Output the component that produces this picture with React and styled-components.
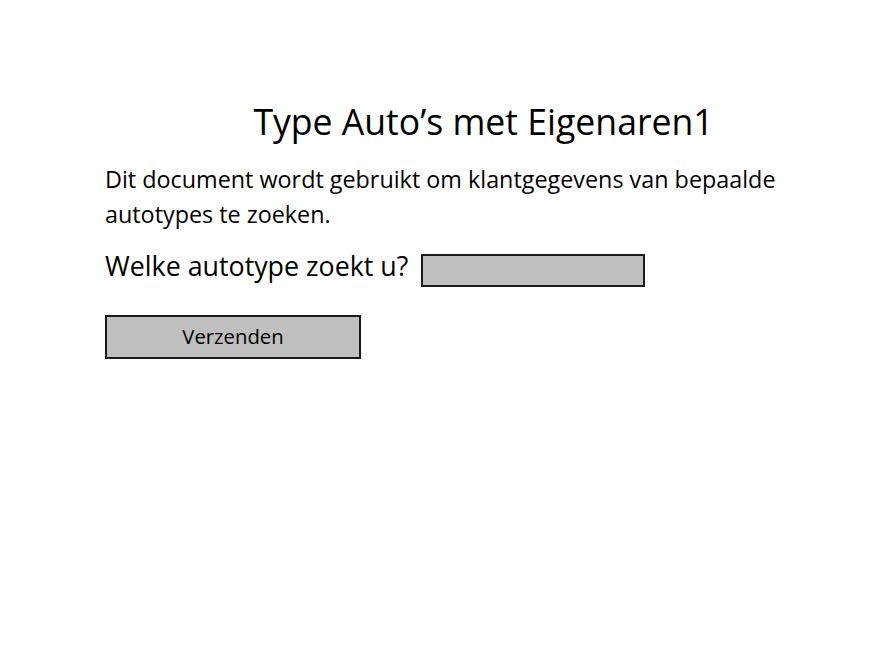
import React from 'react';
import styled, { createGlobalStyle } from 'styled-components';

const GlobalStyle = createGlobalStyle`
  html, body {
    margin: 0;
    padding: 0;
    background: #ffffff;
  }
  body {
    font-family: 'Open Sans', 'Noto Sans', sans-serif;
    color: #000000;
  }
`;

const Page = styled.div`
  width: 888px;
  height: 651px;
  box-sizing: border-box;
  padding: 99px 0 0 105px;
`;

const Title = styled.h1`
  width: 757px;
  margin: 0 0 19px;
  font-size: 35.6px;
  font-weight: 400;
  line-height: 44px;
  text-align: center;
`;

const Intro = styled.p`
  width: 710px;
  margin: 0 0 16px;
  font-size: 23.35px;
  line-height: 35px;
`;

const Row = styled.div`
  display: flex;
  align-items: center;
  gap: 13px;
  margin-bottom: 23px;
`;

const Label = styled.label`
  font-size: 26.8px;
  line-height: 36px;
  padding-bottom: 8px;
`;

const Field = styled.input`
  width: 224px;
  height: 33px;
  box-sizing: border-box;
  border: 2px solid #1a1a1a;
  background: #bfbfbf;
  outline: none;
  padding: 0 6px;
`;

const Button = styled.button`
  width: 256px;
  height: 44px;
  box-sizing: border-box;
  border: 2px solid #1a1a1a;
  background: #bfbfbf;
  font-family: inherit;
  font-size: 20.3px;
  color: #000000;
  padding: 0 0 3px;
  cursor: pointer;
`;

export default function App() {
  return (
    <>
      <GlobalStyle />
      <Page>
        <Title>Type Auto’s met Eigenaren1</Title>
        <Intro>
          Dit document wordt gebruikt om klantgegevens van bepaalde autotypes te zoeken.
        </Intro>
        <Row>
          <Label htmlFor="autotype">Welke autotype zoekt u?</Label>
          <Field id="autotype" type="text" />
        </Row>
        <Button type="button">Verzenden</Button>
      </Page>
    </>
  );
}
